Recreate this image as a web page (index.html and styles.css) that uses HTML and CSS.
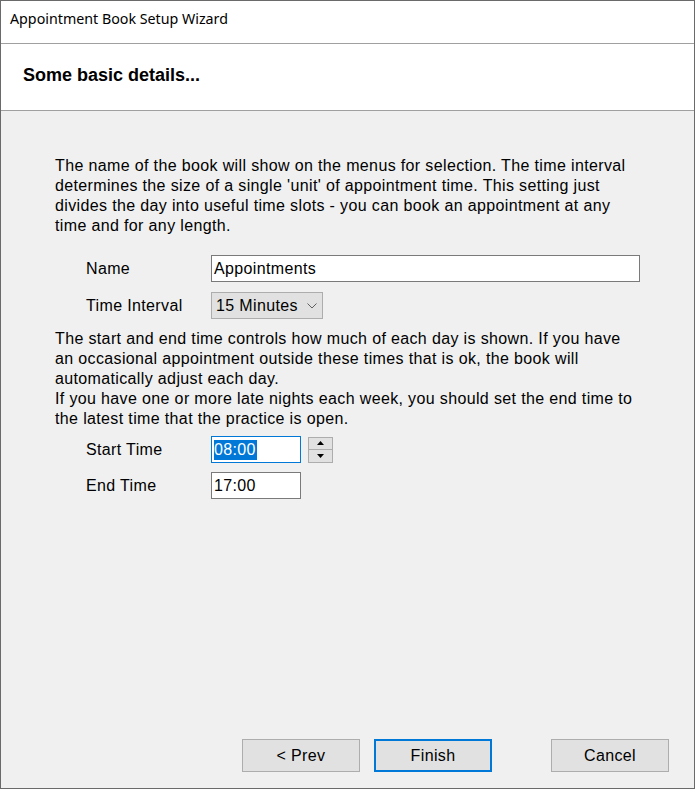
FILE: index.html
```html
<!DOCTYPE html>
<html lang="en">
<head>
<meta charset="utf-8">
<title>Appointment Book Setup Wizard</title>
<link rel="stylesheet" href="styles.css">
</head>
<body>
<div class="window">
  <div class="titlebar">Appointment Book Setup Wizard</div>
  <div class="header"><h1 class="header-title">Some basic details...</h1></div>
  <div class="content">
    <p class="info info-first">The name of the book will show on the menus for selection. The time interval<br>determines the size of a single 'unit' of appointment time. This setting just<br>divides the day into useful time slots - you can book an appointment at any<br>time and for any length.</p>
    <div class="form-row">
      <span class="label">Name</span>
      <div class="textbox textbox-wide">Appointments</div>
    </div>
    <div class="form-row row-gap">
      <span class="label">Time Interval</span>
      <div class="combo">
        <span class="combo-text">15 Minutes</span>
        <svg class="chevron" width="10" height="6" viewBox="0 0 10 6"><polyline points="0.5,0.5 5,5 9.5,0.5" fill="none" stroke="#606060" stroke-width="1"/></svg>
      </div>
    </div>
    <p class="info info-second">The start and end time controls how much of each day is shown. If you have<br>an occasional appointment outside these times that is ok, the book will<br>automatically adjust each day.<br>If you have one or more late nights each week, you should set the end time to<br>the latest time that the practice is open.</p>
    <div class="form-row">
      <span class="label">Start Time</span>
      <div class="textbox textbox-time textbox-focused"><span class="selected">08:00</span></div>
      <div class="spinner">
        <div class="spin-btn spin-up"><svg width="7" height="4" viewBox="0 0 7 4"><polygon points="3.5,0 7,4 0,4" fill="#000"/></svg></div>
        <div class="spin-btn spin-down"><svg width="7" height="4" viewBox="0 0 7 4"><polygon points="0,0 7,0 3.5,4" fill="#000"/></svg></div>
      </div>
    </div>
    <div class="form-row row-gap-small">
      <span class="label">End Time</span>
      <div class="textbox textbox-time">17:00</div>
    </div>
    <div class="buttons">
      <div class="btn">&lt; Prev</div>
      <div class="btn btn-default">Finish</div>
      <div class="btn btn-cancel">Cancel</div>
    </div>
  </div>
</div>
</body>
</html>
```

FILE: styles.css
```css
* { box-sizing: border-box; }

html, body {
  margin: 0;
  padding: 0;
  background: #ffffff;
}

body {
  font-family: "Liberation Sans", Arial, sans-serif;
  font-size: 16px;
  line-height: 20px;
  letter-spacing: 0.36px;
  color: #000;
}

.window {
  width: 695px;
  height: 789px;
  border: 1px solid #6a6a6a;
  display: flex;
  flex-direction: column;
  background: #fff;
}

.titlebar {
  height: 43px;
  padding: 8px 9px 0;
  border-bottom: 1px solid #a0a0a0;
  font-family: "Noto Sans", "Open Sans", sans-serif;
  font-size: 14.25px;
  line-height: 20px;
  letter-spacing: 0;
  color: #000;
  background: #fff;
  flex: none;
}

.header {
  height: 67px;
  padding: 20px 22px 0;
  border-bottom: 1px solid #a0a0a0;
  background: #fff;
  flex: none;
}

.header-title {
  margin: 0;
  font-family: "Liberation Sans", Arial, sans-serif;
  font-weight: bold;
  font-size: 18px;
  line-height: 22px;
  letter-spacing: 0;
}

.content {
  flex: 1;
  background: #f0f0f0;
  padding: 45px 25px 16px 54px;
  display: flex;
  flex-direction: column;
}

.info {
  margin: 0;
  white-space: nowrap;
}

.info-first { margin-bottom: 19px; }
.info-second { margin-top: 10px; margin-bottom: 7px; }

.form-row {
  display: flex;
  align-items: center;
  padding-left: 31px;
}

.row-gap { margin-top: 10px; }
.row-gap-small { margin-top: 9px; }

.label {
  width: 125px;
  flex: none;
}

.textbox {
  height: 27px;
  border: 1px solid #7a7a7a;
  background: #fff;
  padding: 2px 2px 0;
  line-height: 22px;
}

.textbox-wide { width: 429px; }
.textbox-time { width: 90px; }
.textbox-focused { border-color: #0078d7; }

.selected {
  background: #0078d7;
  color: #fff;
  display: inline-block;
  line-height: 20px;
  padding-right: 1px;
}

.combo {
  width: 112px;
  height: 27px;
  border: 1px solid #adadad;
  background: #e1e1e1;
  display: flex;
  align-items: center;
  justify-content: space-between;
  padding: 0 5px 0 4px;
}

.chevron { display: block; margin-top: 1px; }

.spinner {
  margin-left: 7px;
  width: 25px;
  height: 26px;
  display: flex;
  flex-direction: column;
}

.spin-btn {
  flex: 1;
  background: #e1e1e1;
  border: 1px solid #adadad;
  display: flex;
  align-items: center;
  justify-content: center;
}

.spin-btn svg { display: block; }
.spin-down { border-top: none; }

.buttons {
  margin-top: auto;
  display: flex;
  justify-content: flex-end;
  gap: 14px;
}

.btn {
  width: 118px;
  height: 33px;
  border: 1px solid #adadad;
  background: #e1e1e1;
  display: flex;
  align-items: center;
  justify-content: center;
}

.btn-default { border: 2px solid #0078d7; }
.btn-cancel { margin-left: 45px; }
```
